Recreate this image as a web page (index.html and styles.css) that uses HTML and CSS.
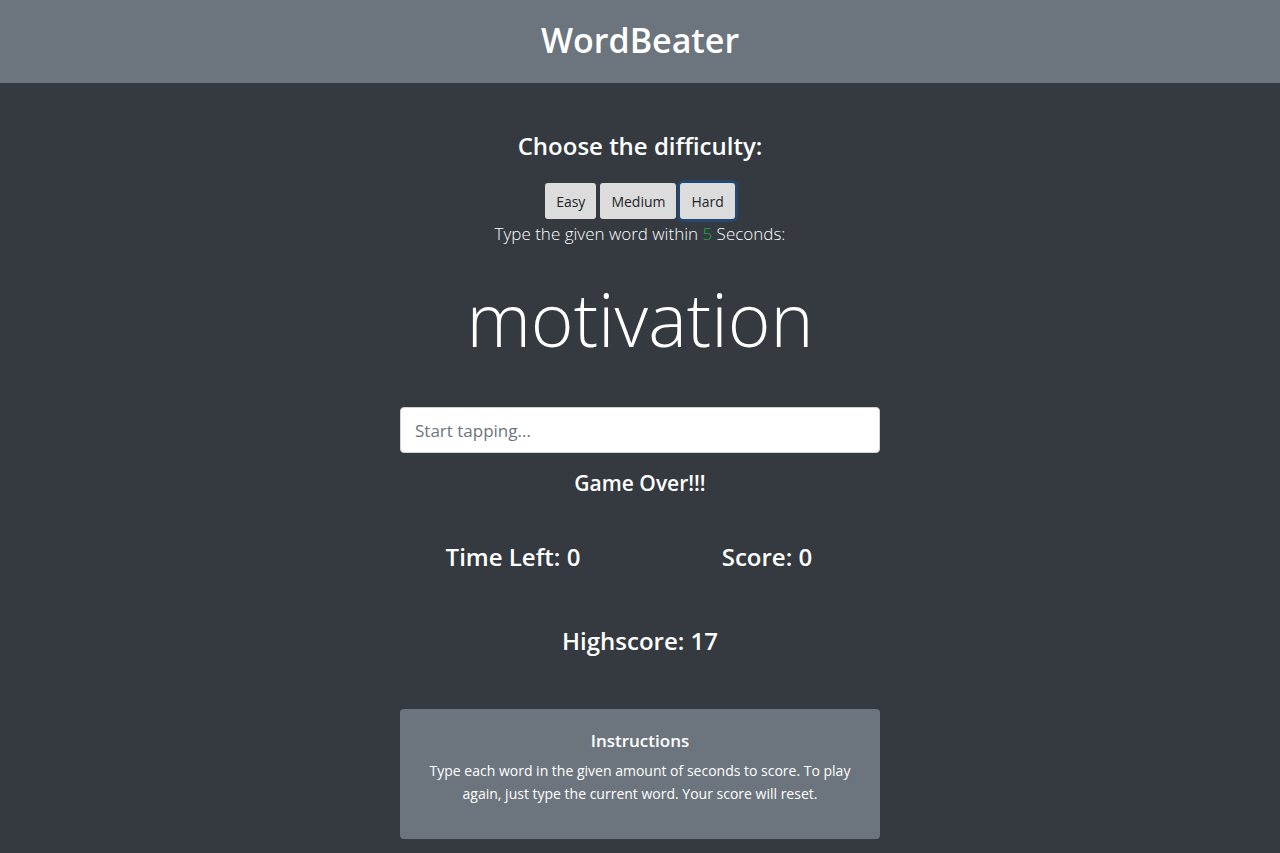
FILE: index.html
```html
<!DOCTYPE html>
<html lang="en">
<head>
<meta charset="utf-8">
<meta name="viewport" content="width=device-width, initial-scale=1">
<title>WordBeater</title>
<link rel="stylesheet" href="styles.css">
</head>
<body>
<header class="site-header"><h1 class="brand">WordBeater</h1></header>
<main class="game">
  <h2 class="heading">Choose the difficulty:</h2>
  <div class="levels">
    <button class="level" type="button">Easy</button>
    <button class="level" type="button">Medium</button>
    <button class="level level-active" type="button">Hard</button>
  </div>
  <p class="prompt">Type the given word within <span class="seconds">5</span> Seconds:</p>
  <p class="word">motivation</p>
  <input class="answer" type="text" aria-label="Type the word" placeholder="Start tapping...">
  <h3 class="message">Game Over!!!</h3>
  <div class="stats">
    <h2 class="stat">Time Left: <span>0</span></h2>
    <h2 class="stat">Score: <span>0</span></h2>
  </div>
  <h2 class="highscore">Highscore: <span>17</span></h2>
  <section class="card">
    <h3 class="card-title">Instructions</h3>
    <p class="card-text">Type each word in the given amount of seconds to score. To play again, just type the current word. Your score will reset.</p>
  </section>
</main>
</body>
</html>
```
FILE: styles.css
```css
* { box-sizing: border-box; }
body { margin: 0; background: #343a40; color: #fff; font-family: "Segoe UI", "Open Sans", "Noto Sans", sans-serif; text-align: center; }
h1, h2, h3, p { margin: 0; }
.site-header { background: #6c757d; padding: 17px 16px 19px; }
.brand { font-size: 34px; line-height: 47px; font-weight: 600; }
.game { width: 480px; max-width: 100%; margin: 0 auto; padding: 46px 0 13px; }
.heading, .stat, .highscore { font-size: 24px; line-height: 34px; font-weight: 600; }
.levels { display: flex; justify-content: center; gap: 4px; margin-top: 20px; }
.level { height: 36px; padding: 0 11px; border: 0; border-radius: 3px; background: #dcdcdc; color: #212529; font: 400 14px "Segoe UI", "Open Sans", sans-serif; }
.level-active { box-shadow: 0 0 0 3px #24486f; }
.prompt { font-size: 17px; line-height: 29px; font-weight: 300; }
.seconds { color: #28a745; }
.word { margin-top: 24px; font-size: 73px; line-height: 94px; font-weight: 300; }
.answer { display: block; width: 100%; height: 46px; margin-top: 41px; padding: 0 14px; border: 1px solid #ced4da; border-radius: 4px; background: #fff; color: #495057; font: 400 17px "Segoe UI", "Open Sans", sans-serif; }
.answer::placeholder { color: #6c757d; opacity: 1; }
.message { margin-top: 15px; font-size: 21px; line-height: 30px; font-weight: 600; }
.stats { display: grid; grid-template-columns: 1fr 1fr; margin: 42px -14px 0; }
.highscore { margin-top: 50px; }
.card { margin-top: 51px; padding: 20px 28px 34px; border-radius: 4px; background: #6c757d; }
.card-title { font-size: 17px; line-height: 24px; font-weight: 600; }
.card-text { margin-top: 6px; font-size: 14px; line-height: 23px; }
```
